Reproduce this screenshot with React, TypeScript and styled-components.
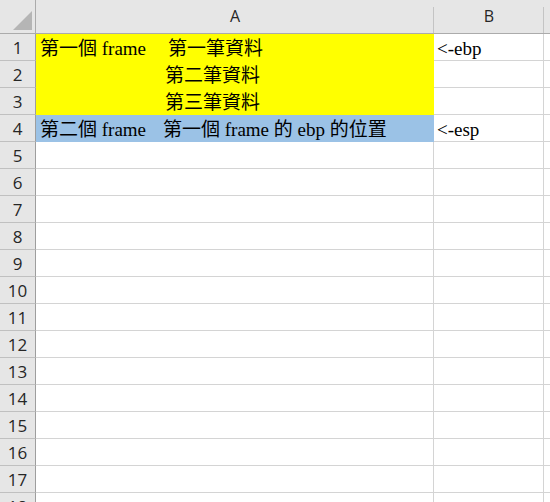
import React from "react"
import styled, { createGlobalStyle } from "styled-components"

const GlobalStyle = createGlobalStyle`
  html, body {
    margin: 0;
    padding: 0;
    background: #ffffff;
    overflow: hidden;
  }
`

type RowData = {
  fill?: string
  label?: string
  data?: string
  indent?: number
  note?: string
}

// indent = where the second text starts, measured from the cell's text start
const rows: RowData[] = [
  { fill: "#ffff00", label: "第一個 frame", data: "第一筆資料", indent: 128, note: "<-ebp" },
  { fill: "#ffff00", data: "第二筆資料", indent: 125 },
  { fill: "#ffff00", data: "第三筆資料", indent: 125 },
  { fill: "#9bc2e6", label: "第二個 frame", data: "第一個 frame 的 ebp 的位置", indent: 123, note: "<-esp" },
]

const TOTAL_ROWS = 18

const App: React.FC = () => (
  <>
    <GlobalStyle />
    <Sheet>
      <Corner>
        <svg width="19" height="19" viewBox="0 0 19 19">
          <polygon points="19,0 19,19 0,19" fill="#b5b5b5" />
        </svg>
      </Corner>
      <ColHead>A</ColHead>
      <ColHead>B</ColHead>
      <ColHead $edge />
      {Array.from({ length: TOTAL_ROWS }, (_, i) => {
        const r = rows[i] || {}
        return (
          <React.Fragment key={i}>
            <RowHead>{i + 1}</RowHead>
            <Cell $fill={r.fill}>
              {r.data && (
                <>
                  <Label $width={r.indent || 0}>{r.label}</Label>
                  <span>{r.data}</span>
                </>
              )}
            </Cell>
            <Cell>{r.note && <Note>{r.note}</Note>}</Cell>
            <Cell $edge />
          </React.Fragment>
        )
      })}
    </Sheet>
  </>
)

const Sheet = styled.div`
  display: grid;
  grid-template-columns: 36px 398px 110px 6px;
  grid-template-rows: 34px repeat(${TOTAL_ROWS}, 27px);
  width: 550px;
  height: 502px;
  overflow: hidden;
  font-family: "Liberation Serif", "Noto Sans CJK TC", serif;
`

const Corner = styled.div`
  box-sizing: border-box;
  background: #e6e6e6;
  border-right: 1px solid #ababab;
  border-bottom: 1px solid #ababab;
  display: flex;
  align-items: flex-end;
  justify-content: flex-end;
  padding: 0 3px 3px 0;
`

const ColHead = styled.div<{ $edge?: boolean }>`
  position: relative;
  box-sizing: border-box;
  background: #e6e6e6;
  border-bottom: 1px solid #ababab;
  display: flex;
  align-items: center;
  justify-content: center;
  padding-bottom: 1px;
  font-family: "Open Sans", "Noto Sans", sans-serif;
  font-size: 16px;
  color: #262626;

  &::after {
    content: "";
    display: ${(p) => (p.$edge ? "none" : "block")};
    position: absolute;
    right: 0;
    top: 7px;
    bottom: 0;
    width: 1px;
    background: #c4c4c4;
  }
`

const RowHead = styled.div`
  box-sizing: border-box;
  background: #e6e6e6;
  border-right: 1px solid #9e9e9e;
  border-bottom: 1px solid #c0c0c0;
  display: flex;
  align-items: center;
  justify-content: center;
  padding-top: 1px;
  font-family: "Open Sans", "Noto Sans", sans-serif;
  font-size: 17px;
  color: #262626;
`

const Cell = styled.div<{ $fill?: string; $edge?: boolean }>`
  box-sizing: border-box;
  background: ${(p) => p.$fill || "#ffffff"};
  border-right: ${(p) => (p.$edge ? "none" : `1px solid ${p.$fill || "#d4d4d4"}`)};
  border-bottom: 1px solid ${(p) => p.$fill || "#d4d4d4"};
  display: flex;
  align-items: center;
  padding: 3px 0 0 4px;
  font-size: 19px;
  line-height: 1;
  color: #000;
  white-space: nowrap;
  overflow: hidden;
`

const Label = styled.span<{ $width: number }>`
  flex: none;
  width: ${(p) => p.$width}px;
`

const Note = styled.span`
  margin-left: -1px;
`

export default App
